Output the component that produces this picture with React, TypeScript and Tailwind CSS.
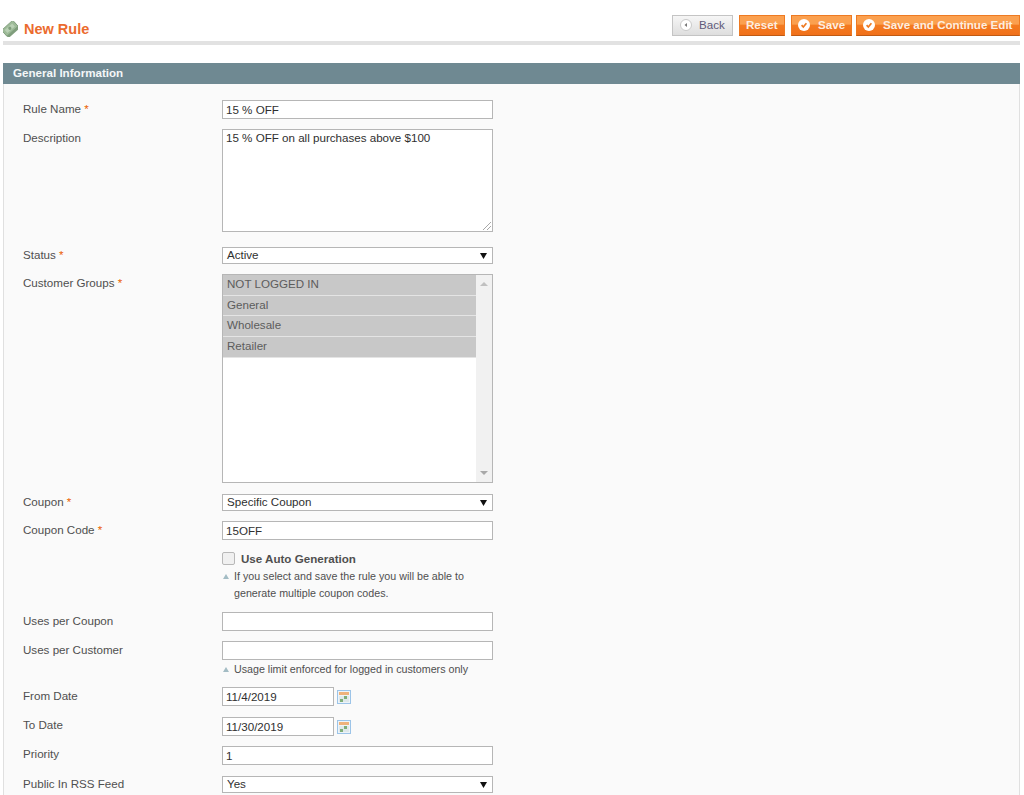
import React from "react";

const label = "text-[11.6px] leading-[16px] text-[#4f4f4f]";
const field = "block w-[271px] border border-[#b6b6b6] bg-white text-[11.6px] text-[#2f2f2f] outline-none";

function Req() {
	return <span className="text-[#eb5e00]"> *</span>;
}

function Row({ title, required, low, className, children }: { title?: string; required?: boolean; low?: boolean; className?: string; children: React.ReactNode }) {
	return (
		<div className={`flex ${className ?? ""}`}>
			<div className={`w-[199px] shrink-0 ${low ? "pt-[1px]" : ""} ${label}`}>
				{title}
				{required ? <Req /> : null}
			</div>
			<div>{children}</div>
		</div>
	);
}

function TextInput({ value, w }: { value: string; w?: string }) {
	return <input readOnly defaultValue={value} className={`${field} h-[19px] ${w ?? ""} px-[3px] pb-[1px]`} />;
}

function Select({ value }: { value: string }) {
	return (
		<div className={`${field} flex h-[17px] items-center justify-between pl-[4px] pr-[5px] leading-none`}>
			<span className="pb-[2px]">{value}</span>
			<svg width="7" height="6" viewBox="0 0 7 6">
				<path d="M0 0h7L3.5 6z" fill="#111" />
			</svg>
		</div>
	);
}

function Note({ children }: { children: React.ReactNode }) {
	return (
		<div className="relative pl-[12px] text-[10.7px] leading-[17px] text-[#4f4f4f]">
			<span className="absolute left-[1px] top-[6px] h-0 w-0 border-x-[3px] border-b-[5px] border-x-transparent border-b-[#a3bcc4]" />
			{children}
		</div>
	);
}

function CalendarIcon() {
	return (
		<svg width="14" height="14" viewBox="0 0 14 14" className="ml-[3px] mt-[3px]">
			<rect x="0.5" y="0.5" width="13" height="13" fill="#eef4f8" stroke="#9cc4e8" />
			<rect x="2" y="2" width="10" height="3" fill="#efb27a" />
			<rect x="2" y="6" width="10" height="6" fill="#dfe8ea" />
			<rect x="3" y="9" width="3" height="3" fill="#7fae78" />
			<rect x="7" y="6" width="3" height="3" fill="#7fae78" />
		</svg>
	);
}

function CheckBadge() {
	return (
		<svg width="12" height="12" viewBox="0 0 12 12" className="shrink-0">
			<circle cx="6" cy="6" r="6" fill="#fff" />
			<path d="M3.6 6.2 5.3 8 8.4 4.2" fill="none" stroke="#ee7a22" strokeWidth="1.7" />
		</svg>
	);
}

function OrangeButton({ text, icon, className }: { text: string; icon?: boolean; className?: string }) {
	return (
		<div className={`flex h-[21px] items-center gap-[8px] border border-[#ee7a22] border-b-[#bf5a14] bg-[linear-gradient(#fba04f_0%,#fba04f_42%,#f47a20_50%,#f0701a_100%)] pb-[2px] pl-[6px] text-[11.6px] font-bold text-[#fdeee0] ${className ?? ""}`}>
			{icon ? <CheckBadge /> : null}
			<span>{text}</span>
		</div>
	);
}

export default function App() {
	const groups = ["NOT LOGGED IN", "General", "Wholesale", "Retailer"];
	return (
		<div className="h-[795px] w-[1024px] overflow-hidden bg-white font-['Liberation_Sans',Arial,sans-serif]">
			<div className="ml-[3px] mr-[4px] flex h-[45px] items-start justify-between border-b-[4px] border-[#e2e2e2] pt-[15px]">
				<div className="flex items-center gap-[6px] pt-[5px]">
					<svg width="15" height="16" viewBox="0 0 15 16">
						<g transform="rotate(-42 7.5 8)">
							<rect x="0" y="5.5" width="15" height="8" fill="#7f9d7c" />
							<rect x="0" y="3" width="15" height="8" fill="#9dba98" stroke="#7f9d7c" strokeWidth="0.8" />
							<rect x="2.5" y="5" width="10" height="4" fill="#b9d0b4" />
							<circle cx="7.5" cy="7" r="1.6" fill="#7f9d7c" />
						</g>
					</svg>
					<h1 className="text-[14.5px] font-bold leading-[18px] text-[#eb6b2e]">New Rule</h1>
				</div>
				<div className="flex items-center">
					<div className="mr-[6px] flex h-[21px] w-[61px] items-center gap-[7px] border border-[#c4c4c4] bg-[linear-gradient(#f6f6f6,#dedede)] pb-[2px] pl-[7px] text-[11.6px] text-[#5f5a7a]">
						<svg width="12" height="12" viewBox="0 0 12 12">
							<circle cx="6" cy="6" r="5.5" fill="#fff" stroke="#c9c9c9" />
							<path d="M7 4v4L4.5 6z" fill="#777" />
						</svg>
						<span>Back</span>
					</div>
					<OrangeButton text="Reset" className="mr-[6px] w-[46px]" />
					<OrangeButton text="Save" icon className="mr-[4px] w-[61px]" />
					<OrangeButton text="Save and Continue Edit" icon className="w-[164px]" />
				</div>
			</div>

			<div className="ml-[3px] mr-[4px] mt-[18px]">
				<div className="h-[21px] bg-[#6f8992] pl-[10px] text-[11.6px] font-bold leading-[20px] text-[#f4f7f8]">General Information</div>
				<div className="h-[720px] border-x border-[#e0e0e0] bg-[#fafafa] pl-[19px] pt-[16px]">
					<Row title="Rule Name" required low>
						<TextInput value="15 % OFF" />
					</Row>
					<Row title="Description" low className="mt-[10px]">
						<div className="relative">
							<textarea readOnly defaultValue="15 % OFF on all purchases above $100" className={`${field} h-[103px] resize-none px-[3px] leading-[15px]`} />
							<svg width="10" height="10" viewBox="0 0 10 10" className="absolute bottom-[1px] right-[1px]">
								<path d="M1 9 9 1M5 9 9 5" stroke="#a8a8a8" strokeWidth="1" />
							</svg>
						</div>
					</Row>
					<Row title="Status" required className="mt-[15px]">
						<Select value="Active" />
					</Row>
					<Row title="Customer Groups" required low className="mt-[10px]">
						<div className="flex h-[209px] w-[271px] border border-[#b6b6b6] bg-white">
							<div className="flex-1 text-[11.6px] text-[#5c5c5c]">
								{groups.map((g) => (
									<div key={g} className="h-[20.7px] border-b border-[#e4e4e4] bg-[#c8c8c8] pl-[4px] leading-[18px]">
										{g}
									</div>
								))}
							</div>
							<div className="flex w-[16px] flex-col items-center justify-between bg-[#f1f1f1] py-[7px]">
								<span className="h-0 w-0 border-x-[4px] border-b-[4px] border-x-transparent border-b-[#c0c0c0]" />
								<span className="h-0 w-0 border-x-[4px] border-t-[4px] border-x-transparent border-t-[#a8a8a8]" />
							</div>
						</div>
					</Row>
					<Row title="Coupon" required className="mt-[11px]">
						<Select value="Specific Coupon" />
					</Row>
					<Row title="Coupon Code" required low className="mt-[10px]">
						<TextInput value="15OFF" />
					</Row>
					<Row className="mt-[11px]">
						<div className="flex h-[15px] items-center gap-[6px] text-[11.6px] font-bold text-[#4f4f4f]">
							<span className="h-[13px] w-[13px] rounded-[2px] border border-[#b8b8b8] bg-[#f0f0f0]" />
							<span>Use Auto Generation</span>
						</div>
						<div className="mt-[2px]">
							<Note>
								If you select and save the rule you will be able to
								<br />
								generate multiple coupon codes.
							</Note>
						</div>
					</Row>
					<Row title="Uses per Coupon" low className="mt-[10px]">
						<TextInput value="" />
					</Row>
					<Row title="Uses per Customer" low className="mt-[10px]">
						<TextInput value="" />
						<div className="mt-[1px]">
							<Note>Usage limit enforced for logged in customers only</Note>
						</div>
					</Row>
					<Row title="From Date" low className="mt-[9px]">
						<div className="flex items-start">
							<TextInput value="11/4/2019" w="!w-[112px]" />
							<CalendarIcon />
						</div>
					</Row>
					<Row title="To Date" className="mt-[11px]">
						<div className="flex items-start">
							<TextInput value="11/30/2019" w="!w-[112px]" />
							<CalendarIcon />
						</div>
					</Row>
					<Row title="Priority" className="mt-[10px]">
						<TextInput value="1" />
					</Row>
					<Row title="Public In RSS Feed" className="mt-[11px]">
						<Select value="Yes" />
					</Row>
				</div>
			</div>
		</div>
	);
}
